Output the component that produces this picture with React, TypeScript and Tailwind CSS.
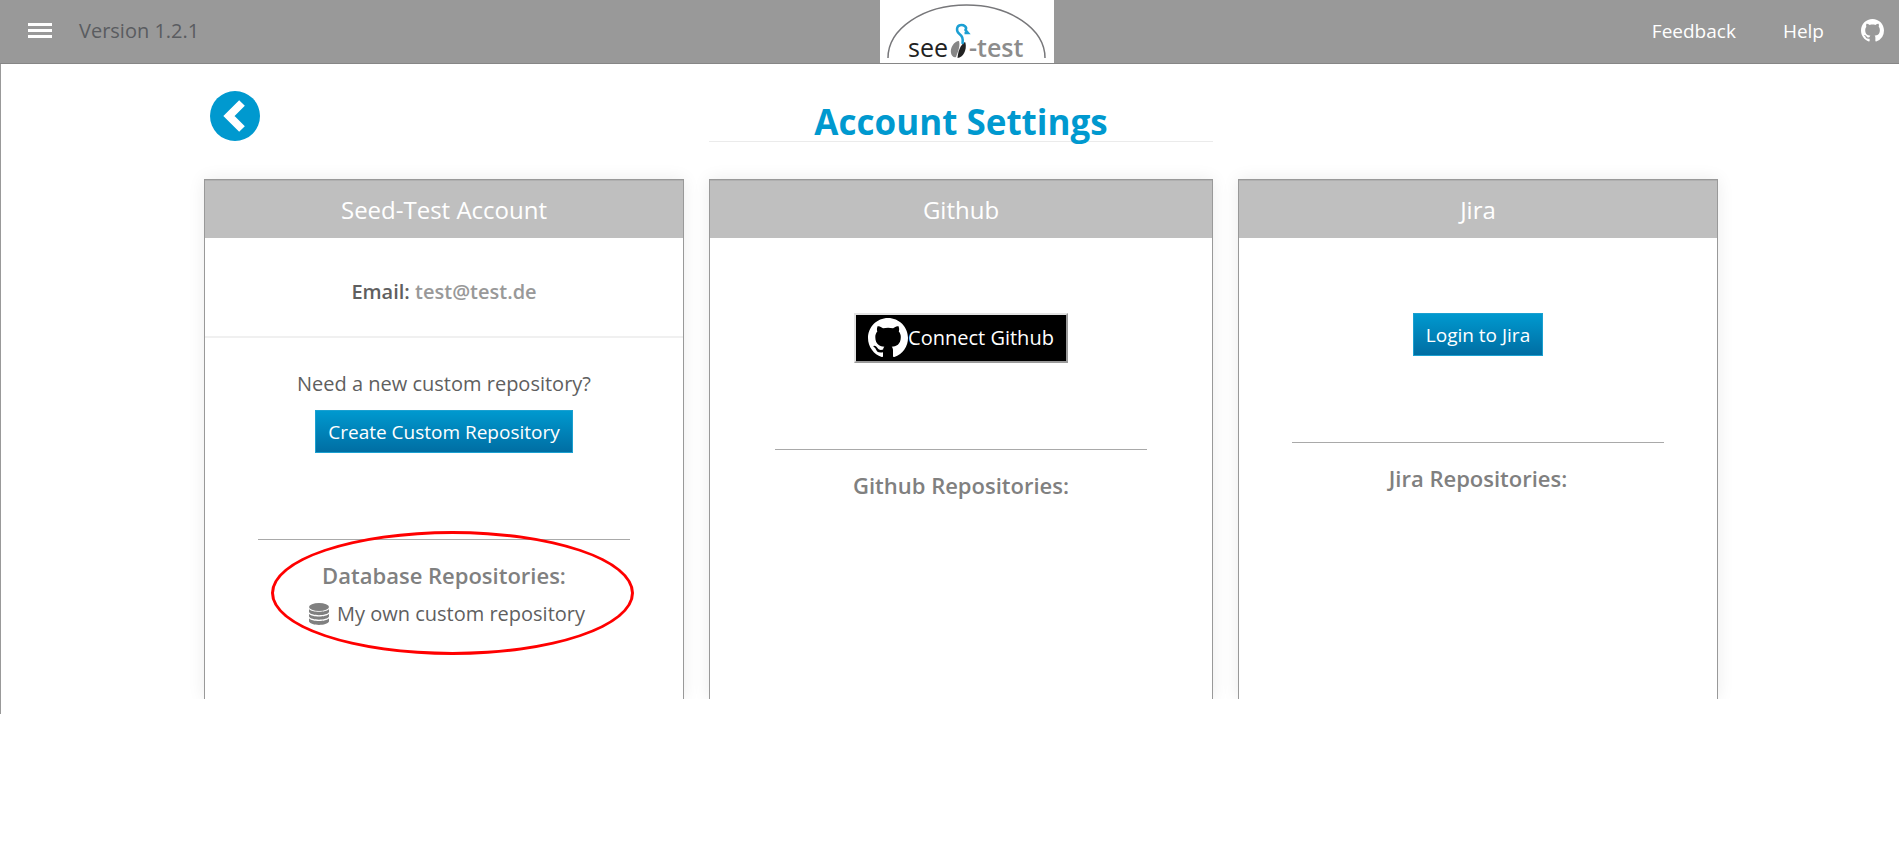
import type { ReactNode } from "react";

function Logo() {
  return (
    <svg viewBox="0 0 174 63" className="block h-[63px] w-[174px] overflow-visible bg-white" role="img" aria-label="seed-test">
      <path d="M8 58C8 29 43 5 86.500 5S165 29 165 58" fill="none" stroke="#77777a" strokeWidth="1.500" />
      <text x="28" y="57" fontFamily="Open Sans, sans-serif" fontSize="25" fontWeight="500" fill="#222222">
        see
      </text>
      <path d="M79 41C74 41 70 48 71 53C71.500 56 74 58 76 57C78 52 80.500 46 79 41Z" fill="#868686" />
      <path d="M85 42C80 45 78 52 77.500 58C83 57.500 87 50 85.500 43Z" fill="#222222" />
      <path
        d="M82.500 44C83.500 38 82 36 79 33.500C76 31 76.500 26 80 25.200C84 24.500 87.500 27 85.500 30L88 33L84.500 33"
        fill="none"
        stroke="#1b9fd3"
        strokeWidth="2.500"
      />
      <text x="89" y="57" fontFamily="Open Sans, sans-serif" fontSize="25" fontWeight="600" fill="#8c8c8c">
        -test
      </text>
    </svg>
  );
}

function GithubMark({ className }: { className: string }) {
  return (
    <svg viewBox="0 0 16 16" className={className} fill="currentColor" aria-hidden="true">
      <path d="M8 0C3.58 0 0 3.58 0 8c0 3.54 2.29 6.53 5.47 7.59.4.07.55-.17.55-.38 0-.19-.01-.82-.01-1.49-2.01.37-2.53-.49-2.69-.94-.09-.23-.48-.94-.82-1.13-.28-.15-.68-.52-.01-.53.63-.01 1.08.58 1.23.82.72 1.21 1.87.87 2.33.66.07-.52.28-.87.51-1.07-1.78-.2-3.64-.89-3.64-3.95 0-.87.31-1.59.82-2.15-.08-.2-.36-1.02.08-2.12 0 0 .67-.21 2.2.82.64-.18 1.32-.27 2-.27s1.36.09 2 .27c1.53-1.04 2.2-.82 2.2-.82.44 1.1.16 1.92.08 2.12.51.56.82 1.27.82 2.15 0 3.07-1.87 3.75-3.65 3.95.29.25.54.73.54 1.48 0 1.07-.01 1.93-.01 2.2 0 .21.15.46.55.38A8.01 8.01 0 0 0 16 8c0-4.42-3.58-8-8-8z" />
    </svg>
  );
}

function DatabaseIcon() {
  return (
    <svg viewBox="0 0 20 22" className="h-[22px] w-5" fill="#808080" aria-hidden="true">
      <ellipse cx="10" cy="4" rx="10" ry="4" />
      <path d="M0 6C3 9.700 17 9.700 20 6V9C18 13.200 2 13.200 0 9Z" />
      <path d="M0 10.700C3 14.400 17 14.400 20 10.700V13.500C18 17.700 2 17.700 0 13.500Z" />
      <path d="M0 15.200C3 18.900 17 18.900 20 15.200V18.500C18 23 2 23 0 18.500Z" />
    </svg>
  );
}

function Header() {
  return (
    <header className="mr-[5px] grid h-16 grid-cols-[1fr_auto_1fr] border-b border-[#868686] bg-[#999999]">
      <div className="flex items-center pb-[2px] pl-7">
        <button type="button" aria-label="Menu" className="flex w-6 flex-col gap-[3px]">
          <span className="h-[3px] bg-white" />
          <span className="h-[3px] bg-white" />
          <span className="h-[3px] bg-white" />
        </button>
        <span className="ml-[27px] text-[#5a5c60]">Version 1.2.1</span>
      </div>
      <a href="#home" className="ml-[34px]">
        <Logo />
      </a>
      <nav className="flex items-center justify-end pr-[15px] pb-[2px] text-[19px] text-white">
        <a href="#feedback">Feedback</a>
        <a href="#help" className="ml-[47px]">
          Help
        </a>
        <a href="#github" aria-label="Github" className="ml-[37px]">
          <GithubMark className="size-[23px]" />
        </a>
      </nav>
    </header>
  );
}

function Card({ title, children }: { title: string; children: ReactNode }) {
  return (
    <section className="min-h-[520px] border border-b-0 border-[#999999] bg-white text-center shadow-[0_0_16px_rgba(0,0,0,0.08)]">
      <h2 className="border-t border-[#b0b0b0] bg-[#bfbfbf] py-3 text-2xl leading-[33px] text-white">{title}</h2>
      {children}
    </section>
  );
}

function Repositories({ title, children }: { title: string; children?: ReactNode }) {
  return (
    <div className="mx-auto mt-[86px] w-[372px] max-w-full border-t border-[#a9a9a9] pt-5">
      <h3 className="text-[22px] leading-[30px] font-semibold text-[#808080]">{title}</h3>
      {children}
    </div>
  );
}

function BlueButton({ children }: { children: ReactNode }) {
  return (
    <button
      type="button"
      className="mx-auto block h-[43px] border border-[#1ba0d0] bg-linear-to-b from-[#0099cf] to-[#006ea3] px-3 text-[19px] text-white"
    >
      {children}
    </button>
  );
}

export default function App() {
  return (
    <div className="min-h-screen bg-white font-['Open_Sans',sans-serif] text-xl leading-7 text-[#5f5f5f]">
      <Header />
      <main className="h-[650px] border-l border-[#999999] pr-[186px] pl-[203px]">
        <div className="grid h-[115px] grid-cols-[480fr_504fr_480fr] gap-[25px]">
          <button type="button" aria-label="Back" className="mt-[27px] ml-[6px] size-[50px]">
            <svg viewBox="0 0 50 50" className="size-[50px]">
              <circle cx="25" cy="25" r="25" fill="#0099cf" />
              <path d="M32 12L19 25L32 38" fill="none" stroke="#ffffff" strokeWidth="8" />
            </svg>
          </button>
          <h1 className="mt-7 h-[50px] border-b border-[#ebebeb] pt-[6px] text-center text-[35px] leading-[48px] font-bold text-[#0099cf]">
            Account Settings
          </h1>
        </div>
        <div className="-mx-5 -mt-5 overflow-clip px-5 pt-5">
          <div className="grid grid-cols-[480fr_504fr_480fr] gap-[25px]">
            <Card title="Seed-Test Account">
              <p className="border-b-2 border-[#f0f0f0] pt-10 pb-[30px] font-semibold">
                Email: <span className="text-[#999999]">test@test.de</span>
              </p>
              <p className="mt-8 mb-3">Need a new custom repository?</p>
              <BlueButton>Create Custom Repository</BlueButton>
              <div className="relative">
                <Repositories title="Database Repositories:">
                  <p className="mt-[10px] flex items-center justify-center gap-2 pl-[6px]">
                    <DatabaseIcon />
                    My own custom repository
                  </p>
                </Repositories>
                <div className="absolute top-[-8px] left-[66px] h-[124px] w-[363px] rounded-[50%] border-3 border-[#ff0000]" />
              </div>
            </Card>
            <Card title="Github">
              <div className="flex justify-center pt-[75px]">
                <button
                  type="button"
                  className="flex h-[50px] items-center border-2 border-t-[#e3e3e3] border-r-[#9a9a9a] border-b-[#9a9a9a] border-l-[#e3e3e3] bg-black px-3 text-white"
                >
                  <GithubMark className="size-10" />
                  Connect Github
                </button>
              </div>
              <Repositories title="Github Repositories:" />
            </Card>
            <Card title="Jira">
              <div className="pt-[75px]">
                <BlueButton>Login to Jira</BlueButton>
              </div>
              <Repositories title="Jira Repositories:" />
            </Card>
          </div>
        </div>
      </main>
    </div>
  );
}
